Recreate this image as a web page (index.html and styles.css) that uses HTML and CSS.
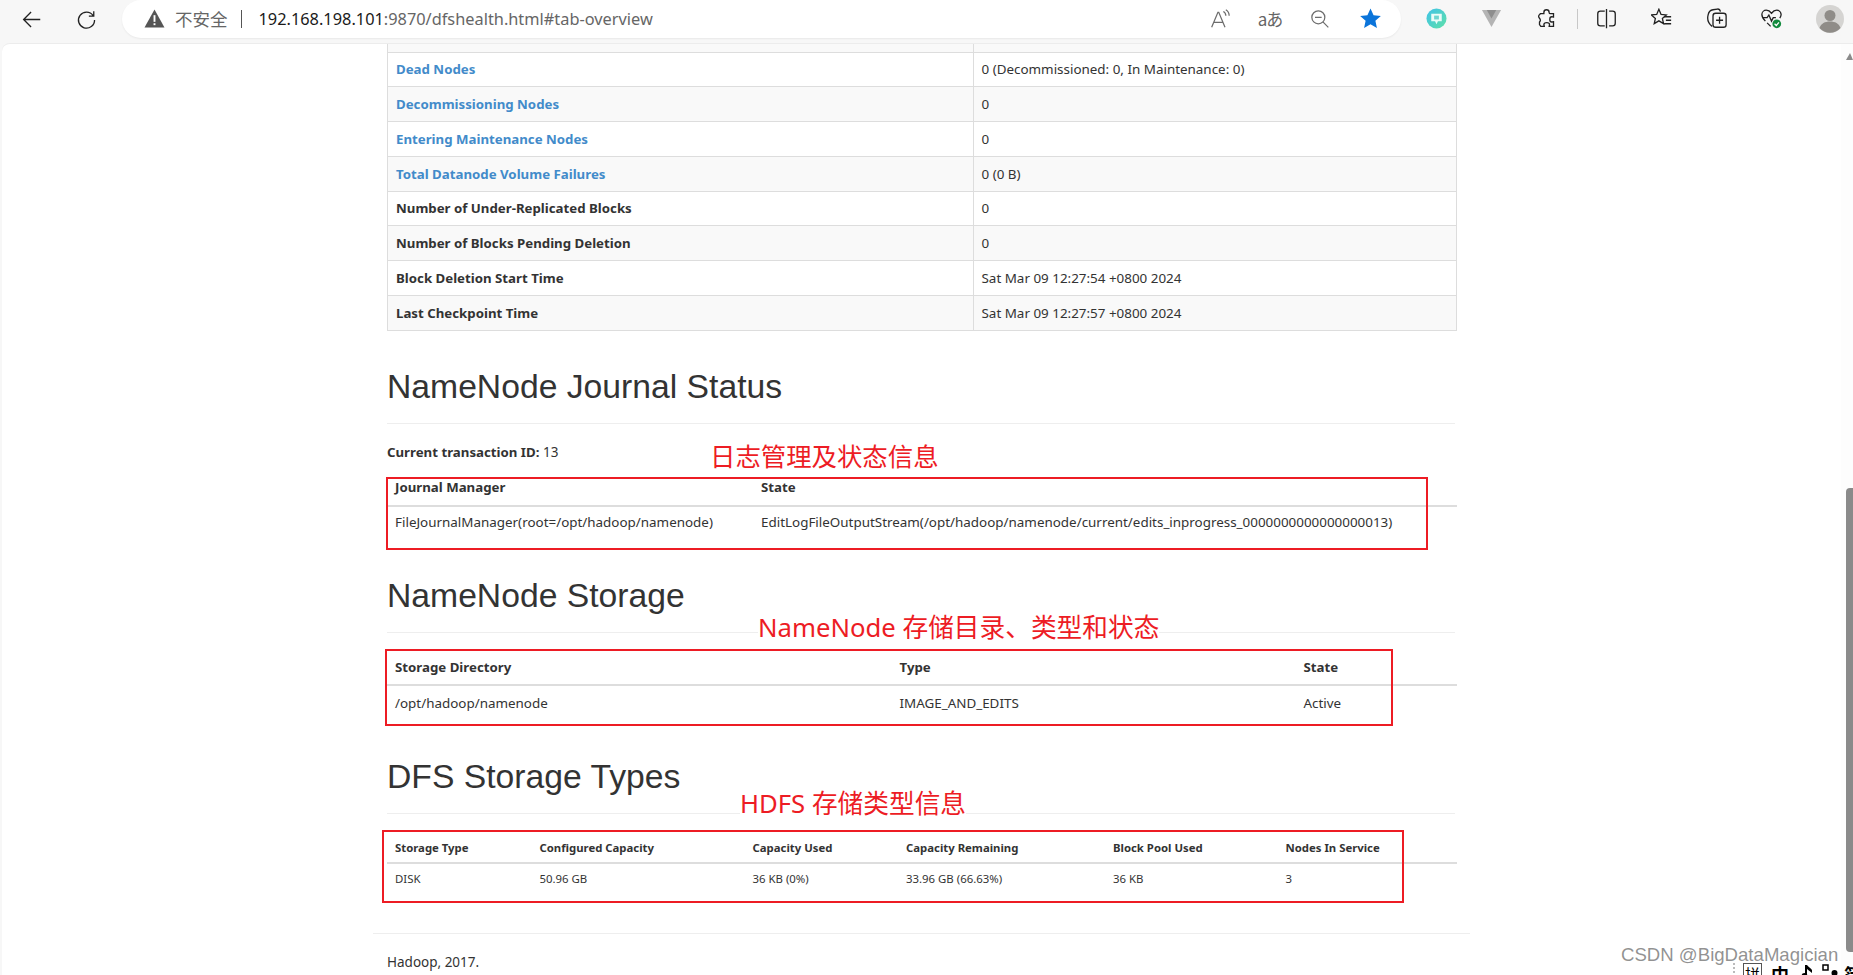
FILE: index.html
```html
<!DOCTYPE html>
<html lang="zh-CN">
<head>
<meta charset="utf-8">
<title>Namenode information</title>
<link rel="stylesheet" href="styles.css">
</head>
<body>
<header class="toolbar">
  <button class="nav-btn" aria-label="Back"><svg viewBox="0 0 24 24" class="ico"><path d="M22 12H3M11.5 3.5L3 12l8.5 8.500" class="st"/></svg></button>
  <button class="nav-btn" aria-label="Reload"><svg viewBox="0 0 24 24" class="ico"><path d="M19.6 7.5A9.2 9.2 0 1 0 21.2 12.5M20.3 2.5v5.6h-5.6" class="st"/></svg></button>
  <div class="omnibox">
    <svg viewBox="0 0 22 20" class="warn"><path d="M11 0.5L21.5 19.5H0.5Z" fill="#555"/><rect x="10" y="6.5" width="2" height="7" fill="#fff"/><rect x="10" y="15" width="2" height="2" fill="#fff"/></svg>
    <span class="insecure">不安全</span>
    <span class="bar-sep"></span>
    <span class="url"><span class="host">192.168.198.101</span>:9870/dfshealth.html#tab-overview</span>
    <div class="omni-tools">
      <span class="omni-tool"><svg viewBox="0 0 24 24" class="ico-sm"><path d="M2 22L9.5 4h1L18 22M5 16h10M16 3c2 1 3 3 3 5M19 1c2.500 1.500 4 4 4 7" class="st-g"/></svg></span>
      <span class="omni-tool"><span class="translate">aあ</span></span>
      <span class="omni-tool"><svg viewBox="0 0 24 24" class="ico-sm"><circle cx="10" cy="10" r="7.800" class="st-g"/><path d="M6 10h8M15.500 15.500L22 22" class="st-g"/></svg></span>
      <span class="omni-tool"><svg viewBox="0 0 24 24" class="star"><path d="M12 1.500l3.200 7 7.600.8-5.700 5.100 1.600 7.500L12 18.100l-6.700 3.800 1.600-7.500L1.200 9.300l7.600-.8z" fill="#0a74da"/></svg></span>
    </div>
  </div>
  <div class="ext-tools">
    <span class="tool"><svg viewBox="0 0 22 22" class="ico"><defs><linearGradient id="tealG" x1="0" y1="0" x2="1" y2="1"><stop offset="0" stop-color="#3fc3e8"/><stop offset="1" stop-color="#5fe0a8"/></linearGradient></defs><circle cx="11" cy="11" r="10.500" fill="url(#tealG)"/><path d="M5.500 6h11v8h-4l-1.500 3-1.500-3h-4z" fill="#eafcf8"/><rect x="8.500" y="8" width="5" height="4" fill="#6fd5d0"/></svg></span>
    <span class="tool"><svg viewBox="0 0 22 20" class="ico"><path d="M1 1h20L11 19z" fill="#b4b4b4"/><path d="M6 1h10l-5 9z" fill="#8e8e8e"/></svg></span>
    <span class="tool"><svg viewBox="0 0 24 24" class="ico"><path d="M9 5c0-4 6-4 6 0 0 1 .5 1.500 1.500 1.500H20v4c-.5 0-1.500-.5-2-.5-3 0-3 6 0 6 .5 0 1.500-.5 2-.5v5.500h-5c0-.5.500-1.500.500-2 0-3-6.500-3-6.500 0 0 .5.500 1.500.500 2H5.500L4 19v-3c.5-.5 1-1.500 1-2 0-2-2-2.500-2-4.500S5 7 5 6.500H9z" class="st"/></svg></span>
    <span class="tool-sep"></span>
    <span class="tool tool-split"><svg viewBox="0 0 24 24" class="ico"><path d="M10 3.500H5A3 3 0 0 0 2 6.500v11a3 3 0 0 0 3 3h5M12 1v22M15 3.500h4a3 3 0 0 1 3 3v11a3 3 0 0 1-3 3h-4" class="st"/></svg></span>
    <span class="tool"><svg viewBox="0 0 24 24" class="ico"><path d="M9 1.500l2.500 5.800 6 .6-4.500 4 1.300 6-5.300-3.200-5.300 3.200 1.300-6-4.500-4 6-.6z" class="st"/><path d="M15 10h8M17 14h6M15 18h8" class="st"/></svg></span>
    <span class="tool"><svg viewBox="0 0 24 24" class="ico"><path d="M7 21C3 18 1 13 2.500 7.500 3 5 5 2.500 8 2l5-.8c2-.2 3 1 3.500 3" class="st"/><rect x="8" y="6" width="15" height="16" rx="3" class="st"/><path d="M15.500 10v8M11.500 14h8" class="st"/></svg></span>
    <span class="tool"><svg viewBox="0 0 24 24" class="ico"><path d="M5 15C2 12 1 10 1 7.500 1 4.500 3.500 2.500 6 2.500c2.500 0 4.500 1.500 6 3.500 1.500-2 3.500-3.500 6-3.500 2.500 0 5 2 5 5 0 1.500-.5 2.500-1.500 4" class="st"/><path d="M2 11h5l2-3 3 7 2-4h3M7 17l4 4" class="st"/><circle cx="18" cy="18" r="5" fill="#108a3c"/><path d="M15.500 18l2 2 3-3.500" stroke="#fff" stroke-width="1.400" fill="none"/></svg></span>
    <span class="avatar"><svg viewBox="0 0 28 28" class="avatar-svg"><circle cx="14" cy="14" r="14" fill="#d5d4d2"/><circle cx="14" cy="10.500" r="5.500" fill="#8f8c88"/><path d="M3.500 23c1.500-4.500 5.500-6.500 10.500-6.500s9 2 10.500 6.500A14 14 0 0 1 3.500 23z" fill="#8f8c88"/></svg></span>
  </div>
</header>

<div class="viewport">
  <main class="page">
    <div class="container">
      <table class="table table-overview">
        <colgroup><col class="ov-a"><col></colgroup>
        <tr class="cut-row"><td></td><td></td></tr>
        <tr><th><a href="#dead">Dead Nodes</a></th><td>0 (Decommissioned: 0, In Maintenance: 0)</td></tr>
        <tr><th><a href="#dec">Decommissioning Nodes</a></th><td>0</td></tr>
        <tr><th><a href="#maint">Entering Maintenance Nodes</a></th><td>0</td></tr>
        <tr><th><a href="#vol">Total Datanode Volume Failures</a></th><td>0 (0 B)</td></tr>
        <tr><th>Number of Under-Replicated Blocks</th><td>0</td></tr>
        <tr><th>Number of Blocks Pending Deletion</th><td>0</td></tr>
        <tr><th>Block Deletion Start Time</th><td>Sat Mar 09 12:27:54 +0800 2024</td></tr>
        <tr><th>Last Checkpoint Time</th><td>Sat Mar 09 12:27:57 +0800 2024</td></tr>
      </table>

      <div class="page-header"><h1>NameNode Journal Status</h1></div>
      <p class="txid"><b>Current transaction ID:</b> 13</p>
      <table class="table-plain table-journal">
        <colgroup><col class="j-a"><col></colgroup>
        <thead><tr><th>Journal Manager</th><th>State</th></tr></thead>
        <tbody><tr><td>FileJournalManager(root=/opt/hadoop/namenode)</td><td>EditLogFileOutputStream(/opt/hadoop/namenode/current/edits_inprogress_0000000000000000013)</td></tr></tbody>
      </table>

      <div class="page-header page-header-storage"><h1>NameNode Storage</h1></div>
      <table class="table-plain table-storage">
        <colgroup><col class="s-a"><col class="s-b"><col></colgroup>
        <thead><tr><th>Storage Directory</th><th>Type</th><th>State</th></tr></thead>
        <tbody><tr><td>/opt/hadoop/namenode</td><td>IMAGE_AND_EDITS</td><td>Active</td></tr></tbody>
      </table>

      <div class="page-header page-header-dfs"><h1>DFS Storage Types</h1></div>
      <table class="table-plain table-dfs">
        <colgroup><col class="d-a"><col class="d-b"><col class="d-c"><col class="d-d"><col class="d-e"><col></colgroup>
        <thead><tr><th>Storage Type</th><th>Configured Capacity</th><th>Capacity Used</th><th>Capacity Remaining</th><th>Block Pool Used</th><th>Nodes In Service</th></tr></thead>
        <tbody><tr><td>DISK</td><td>50.96 GB</td><td>36 KB (0%)</td><td>33.96 GB (66.63%)</td><td>36 KB</td><td>3</td></tr></tbody>
      </table>

      <hr class="footer-rule">
      <p class="footer-text">Hadoop, 2017.</p>
    </div>
  </main>
  <aside class="scrollbar">
    <span class="scroll-arrow"></span>
    <span class="scroll-thumb"></span>
  </aside>

  <div class="anno-box box-journal"></div>
  <div class="anno-box box-storage"></div>
  <div class="anno-box box-dfs"></div>
  <div class="anno-label label-journal">日志管理及状态信息</div>
  <div class="anno-label label-storage">NameNode 存储目录、类型和状态</div>
  <div class="anno-label label-dfs">HDFS 存储类型信息</div>
  <div class="watermark">CSDN @BigDataMagician</div>
  <div class="ime">
    <span class="ime-handle"></span>
    <span class="ime-key ime-boxed">拼</span>
    <span class="ime-key ime-zh">中</span>
    <svg viewBox="0 0 12 14" class="ime-note"><path d="M4 14V1h2c1 2 4 3 5 5v3C9 7 7 6 6 5v9z" fill="#000"/><circle cx="3.500" cy="12" r="3" fill="#000"/></svg>
    <svg viewBox="0 0 16 14" class="ime-dots"><rect x="1" y="1" width="5" height="5" fill="#fff" stroke="#000" stroke-width="1.500"/><circle cx="12.500" cy="9" r="3" fill="#000"/></svg>
    <span class="ime-key ime-last">简</span>
  </div>
</div>
</body>
</html>
```
FILE: styles.css
```css
* { box-sizing: border-box; }
html, body { margin: 0; height: 100%; overflow: hidden; }
body { width: 1853px; height: 975px; background: #f7f7f7; color: #333; font-family: "Liberation Sans", Arial, sans-serif; display: flex; flex-direction: column; }

/* browser chrome */
.toolbar { height: 43px; flex: none; display: flex; align-items: flex-start; padding-left: 4px; background: #f7f7f7; position: relative; }
.nav-btn { width: 55px; height: 38px; border: 0; background: none; padding: 0; display: flex; align-items: center; justify-content: center; }
.ico { width: 21px; height: 21px; display: block; }
.ico-sm { width: 20px; height: 20px; display: block; }
.st { fill: none; stroke: #222; stroke-width: 1.5; }
.st-g { fill: none; stroke: #6d6d6d; stroke-width: 1.5; }
.omnibox { width: 1279px; height: 37.5px; margin-left: 8px; background: #fff; border-radius: 19px; box-shadow: 0 1px 2px rgba(0,0,0,.06); display: flex; align-items: center; padding-left: 22px; }
.warn { width: 21px; height: 19px; flex: none; }
.insecure { margin-left: 10px; font: 17.5px "Noto Sans CJK SC", sans-serif; color: #666; }
.bar-sep { width: 1px; height: 18px; margin: 0 17px 0 13px; background: #555; }
.url { font: 16.35px "Noto Sans", sans-serif; color: #666; white-space: nowrap; }
.host { color: #1a1a1a; }
.omni-tools { margin-left: auto; margin-right: 6px; display: flex; }
.omni-tool { width: 50px; display: flex; justify-content: center; align-items: center; }
.translate { font: 17px "Noto Sans CJK SC", sans-serif; color: #666; letter-spacing: -1px; }
.star { width: 23px; height: 23px; display: block; }
.ext-tools { position: absolute; left: 1408.5px; top: 0; height: 37px; display: flex; align-items: center; }
.tool { width: 55px; display: flex; justify-content: center; }
.tool-sep { width: 1.5px; height: 20px; margin-left: 3px; background: #c8c8c8; }
.tool-split { margin-left: 1px; }
.avatar { margin-left: 16.5px; }
.avatar-svg { width: 28px; height: 28px; display: block; }

/* viewport */
.viewport { flex: 1; min-height: 0; display: flex; position: relative; overflow: hidden; padding-left: 2px; }
.page { flex: 1; min-width: 0; background: #fff; border-top-left-radius: 8px; overflow: hidden; border-top: 1px solid #ececec; }
.container { width: 1097px; margin: -1px auto 0; padding: 0 15px 0 14px; font-family: "Noto Sans", "Open Sans", sans-serif; }
.scrollbar { width: 12px; flex: none; background: #fdfdfd; display: flex; flex-direction: column; align-items: flex-end; border-top: 1px solid #ececec; }
.scroll-arrow { width: 0; height: 0; margin-top: 9px; border-left: 4px solid transparent; border-right: 3px solid transparent; border-bottom: 7px solid #8a8a8a; }
.scroll-thumb { width: 7px; height: 464px; margin-top: 428px; background: #8a8a8a; border-radius: 4px 0 0 4px; }

/* tables */
table { border-collapse: collapse; table-layout: fixed; width: 1070px; font-size: 13.42px; line-height: 18px; }
th { text-align: left; font-weight: 700; font-size: 13.25px; }
th, td { padding: 0 8px; vertical-align: middle; }
a { color: #428bca; text-decoration: none; }
.table-overview th, .table-overview td { border: 1px solid #ddd; height: 34.75px; }
.table-overview tr:nth-child(odd) { background: #f9f9f9; }
.table-overview .cut-row td { height: 9px; border-top: 0; }
.ov-a { width: 585.5px; }
.table-plain thead th { border-bottom: 2px solid #ddd; height: 35px; vertical-align: middle; }
.table-plain tbody td { height: 35px; }
.table-journal { margin-top: 9px; }
.table-journal thead th { padding-bottom: 1px; }
.table-journal tbody td { padding-bottom: 4px; }
.j-a { width: 366px; }
.s-a { width: 504.5px; }
.s-b { width: 404px; }
.table-storage { margin-top: 17px; }
.table-storage thead th { padding-top: 1px; }
.table-dfs { margin-top: 20px; font-size: 11.4px; }
.table-dfs thead th { height: 29px; font-size: 11.35px; }
.table-dfs tbody td { height: 33px; padding-bottom: 2px; }
.d-a { width: 144.5px; }
.d-b { width: 213px; }
.d-c { width: 153.5px; }
.d-d { width: 207px; }
.d-e { width: 172.5px; }

/* headings */
.page-header { margin-top: 36px; padding-bottom: 18px; border-bottom: 1px solid #eee; }
.page-header-storage { margin-top: 35px; }
.page-header-dfs { margin-top: 37px; }
h1 { margin: 0; font-family: "Liberation Sans", Arial, sans-serif; font-size: 33.7px; line-height: 38px; font-weight: 400; color: #333; }
.txid { margin: 18px 0 0; font-size: 13.5px; line-height: 20px; }
.txid b { font-size: 13.25px; }
.footer-rule { border: 0; border-top: 1px solid #eee; margin: 37px -15px 0 -14px; }
.footer-text { margin: 18px 0 0; font-size: 13.5px; line-height: 20px; }

/* overlays */
.anno-box { position: absolute; border: 2px solid #ed1c24; }
.box-journal { left: 385.5px; top: 434px; width: 1042px; height: 73px; }
.box-storage { left: 384.5px; top: 606px; width: 1008px; height: 77px; }
.box-dfs { left: 382px; top: 787px; width: 1022px; height: 73px; }
.anno-label { position: absolute; background: #fff; color: #ed1c24; font: 25.4px/30px "Noto Sans", "Noto Sans CJK SC", sans-serif; white-space: nowrap; }
.label-journal { left: 710px; top: 398px; }
.label-storage { left: 758px; top: 570px; font-size: 25.7px; }
.label-dfs { left: 740px; top: 746px; font-size: 25.7px; }
.watermark { position: absolute; left: 1621px; top: 900px; color: rgba(110,110,110,.75); font: 18.6px/24px "Liberation Sans", Arial, sans-serif; white-space: nowrap; }
.ime { position: absolute; left: 1733px; top: 920px; height: 22px; display: flex; align-items: flex-start; color: #000; font: 700 18px/22px "Noto Sans CJK SC", sans-serif; white-space: nowrap; }
.ime-handle { width: 2px; height: 14px; margin-right: 8px; border-left: 2px dotted #bbb; }
.ime-boxed { width: 19px; height: 22px; border: 1px solid #555; font-size: 15px; line-height: 20px; text-align: center; font-weight: 400; }
.ime-zh { margin-left: 9px; }
.ime-note { width: 12px; height: 14px; margin: 1px 0 0 12px; flex: none; }
.ime-dots { width: 16px; height: 14px; margin: 1px 0 0 9px; flex: none; }
.ime-last { margin-left: 6px; }
```
